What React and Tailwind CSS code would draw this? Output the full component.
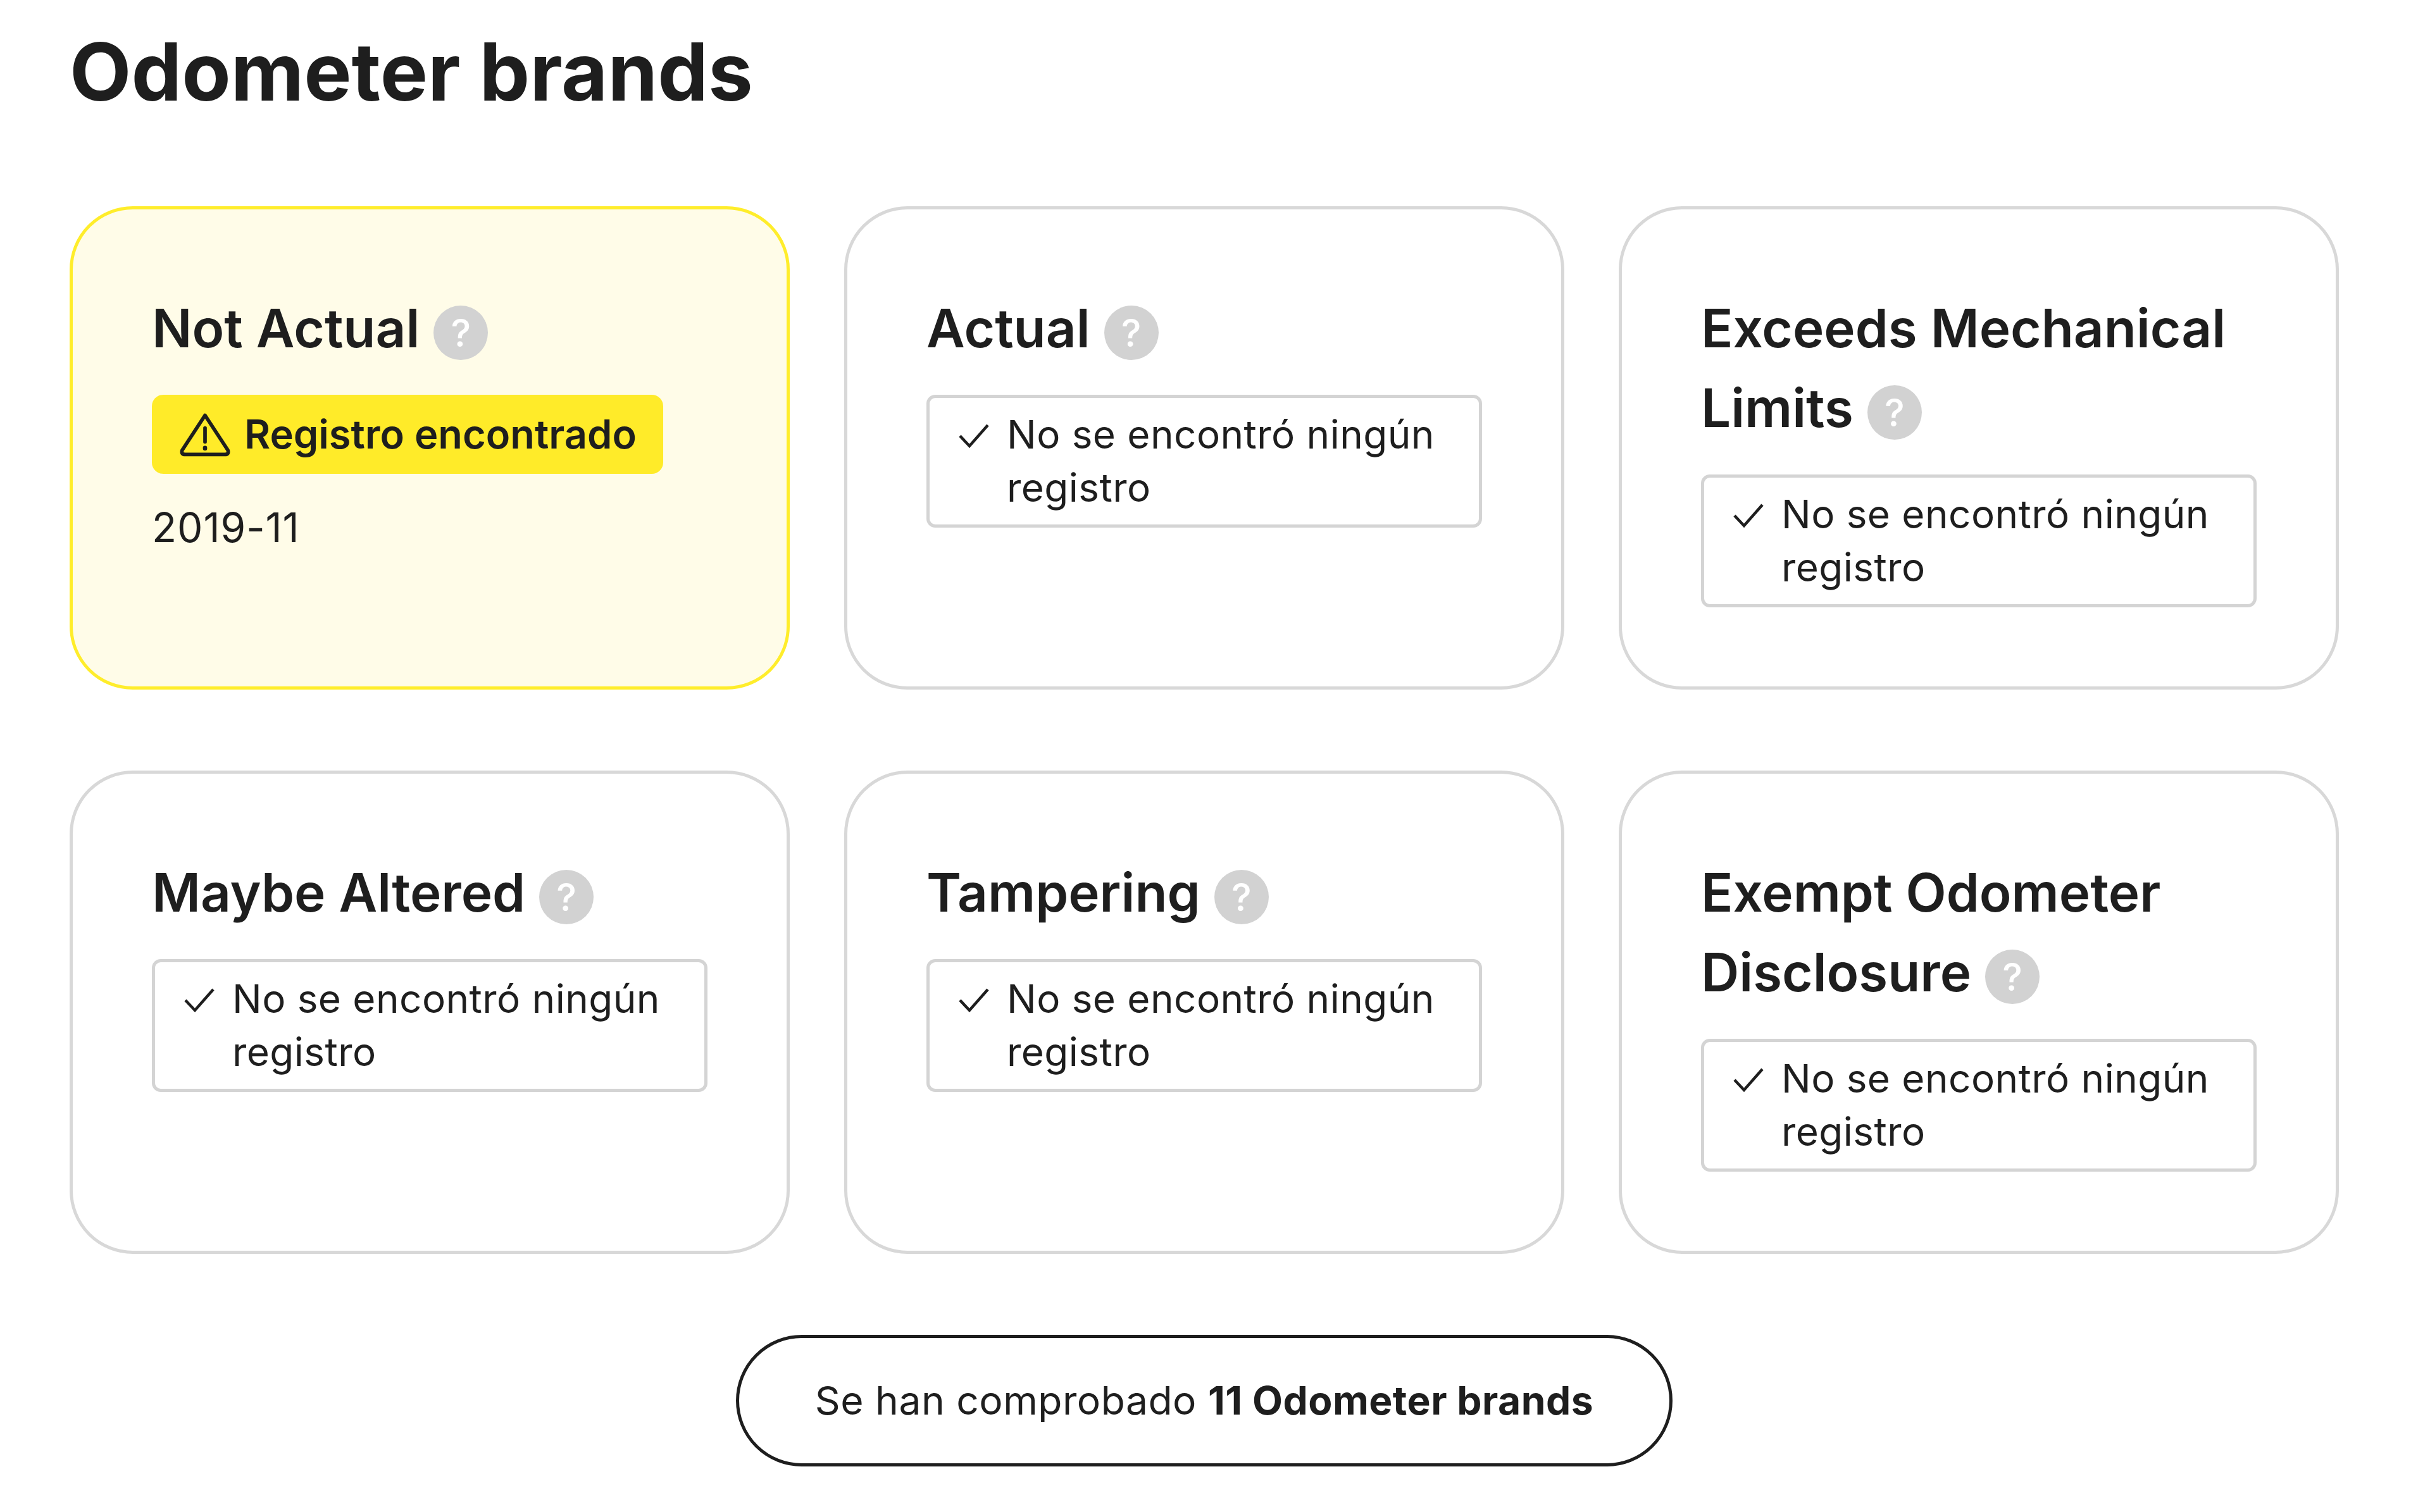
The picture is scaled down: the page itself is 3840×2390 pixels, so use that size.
const FONT = "font-['Inter',sans-serif]";

const cards = [
  { title: ["Not Actual"], found: true },
  { title: ["Actual"] },
  { title: ["Exceeds Mechanical", "Limits"] },
  { title: ["Maybe Altered"] },
  { title: ["Tampering"] },
  { title: ["Exempt Odometer", "Disclosure"] },
];

function HelpDot() {
  return (
    <span className="ml-[22px] inline-flex h-[86px] w-[86px] items-center justify-center rounded-full bg-[#d2d2d2] align-middle text-[60px] font-medium leading-none text-white">
      ?
    </span>
  );
}

function WarningIcon() {
  return (
    <svg width="80" height="72" viewBox="0 0 84 72" fill="none" stroke="#1e1e1e" strokeWidth="6" strokeLinecap="round" strokeLinejoin="round">
      <path d="M42 4 L80 62 Q82 69 75 69 L9 69 Q2 69 4 62 Z" />
      <path d="M42 25 L42 48" />
      <path d="M42 58 L42 59" strokeWidth="7" />
    </svg>
  );
}

function CheckIcon() {
  return (
    <svg className="mt-[24px] shrink-0" width="48" height="40" viewBox="0 0 48 40" fill="none" stroke="#1e1e1e" strokeWidth="4.5">
      <path d="M2 20 L17 36 L46 3" />
    </svg>
  );
}

function Card({ title, found }) {
  return (
    <div className={`h-[764px] rounded-[100px] border-[5px] px-[125px] pt-[125px] ${found ? "border-[#ffed2b] bg-[#fffce8]" : "border-[#d8d8d8] bg-white"}`}>
      <h3 className="text-[83.5px] font-semibold leading-[126px] text-[#1e1e1e]">
        {title.map((line, i) => (
          <span key={line}>
            {line}
            {i < title.length - 1 ? <br /> : <HelpDot />}
          </span>
        ))}
      </h3>
      {found ? (
        <div>
          <div className="mt-[42px] inline-flex h-[125px] items-center gap-[22px] rounded-[18px] bg-[#ffeb29] pl-[44px] pr-[42px] text-[63.2px] font-semibold text-[#1e1e1e]">
            <WarningIcon />
            <span>Registro encontrado</span>
          </div>
          <p className="mt-[43px] text-[64px] leading-[84px] tracking-[1px] text-[#1e1e1e]">2019-11</p>
        </div>
      ) : (
        <div className="mt-[42px] flex h-[210px] gap-[28px] rounded-[14px] border-[5px] border-[#d4d4d4] pl-[46px] pr-[20px] pt-[16px]">
          <CheckIcon />
          <p className="text-[62px] leading-[84px] tracking-[0.45px] text-[#1e1e1e]">No se encontró ningún registro</p>
        </div>
      )}
    </div>
  );
}

export default function App() {
  return (
    <div className={`min-h-[2390px] w-[3840px] bg-white pl-[110px] pt-[36px] ${FONT}`}>
      <h1 className="text-[126.5px] font-bold leading-[155px] text-[#1e1e1e]">Odometer brands</h1>
      <div className="mt-[135px] grid w-[3586px] grid-cols-3 gap-x-[86px] gap-y-[128px]">
        {cards.map((card) => (
          <Card key={card.title[0]} title={card.title} found={card.found} />
        ))}
      </div>
      <div className="mt-[128px] flex w-[3586px] justify-center">
        <div className="flex h-[208px] w-[1480px] items-center justify-center rounded-full border-[5px] border-[#1e1e1e] text-[62.3px] tracking-[0.5px] text-[#1e1e1e]">
          <span>Se han comprobado <b className="font-bold">11 Odometer brands</b></span>
        </div>
      </div>
    </div>
  );
}
